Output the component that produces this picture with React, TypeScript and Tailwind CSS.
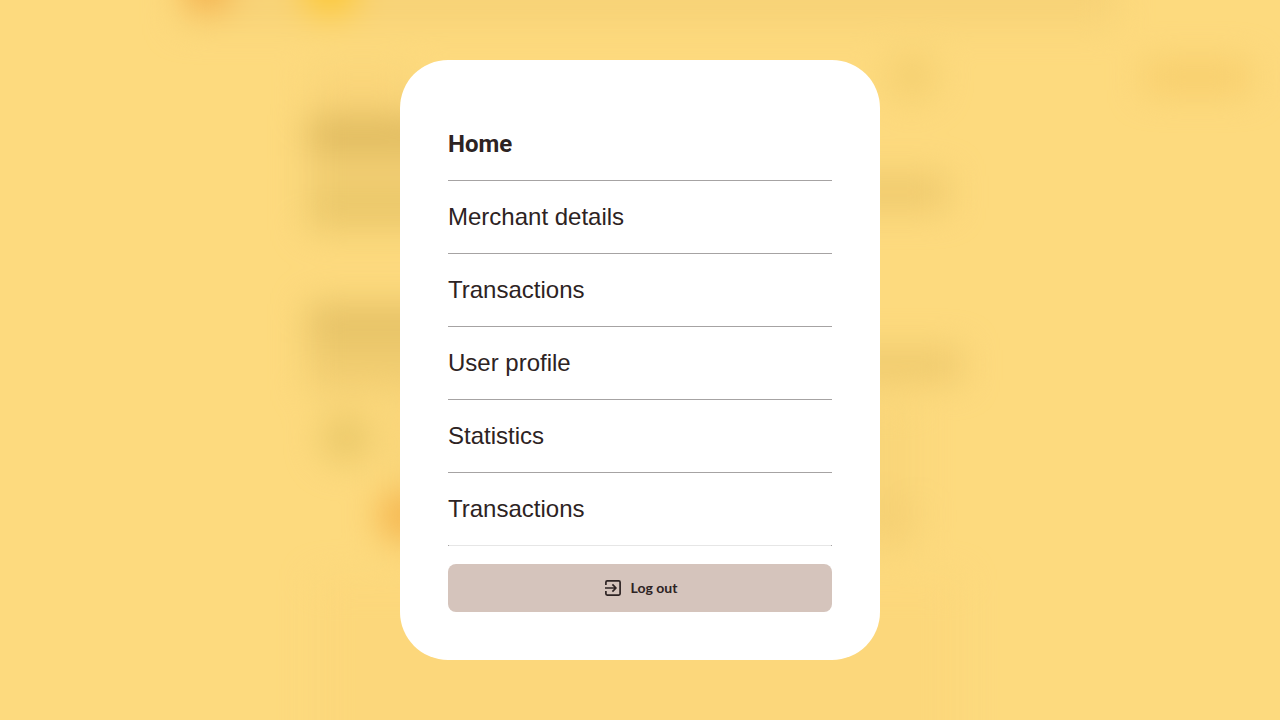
const menuItems = [
  { label: "Home", current: true },
  { label: "Merchant details", current: false },
  { label: "Transactions", current: false },
  { label: "User profile", current: false },
  { label: "Statistics", current: false },
  { label: "Transactions", current: false },
];

function BlurredBackdrop() {
  return (
    <svg
      aria-hidden="true"
      className="absolute inset-0 h-full w-full"
      viewBox="0 0 1280 720"
      preserveAspectRatio="xMidYMid slice"
    >
      <defs>
        <filter
          id="soft"
          filterUnits="userSpaceOnUse"
          x="-100"
          y="-100"
          width="1480"
          height="920"
          colorInterpolationFilters="sRGB"
        >
          <feGaussianBlur stdDeviation="17" />
        </filter>
      </defs>
      <g filter="url(#soft)">
        <rect x="180" y="-60" width="935" height="84" fill="#f7d277" />
        <circle cx="207" cy="-12" r="24" fill="#f4b04c" />
        <circle cx="330" cy="-12" r="28" fill="#fcc836" />
        <rect x="312" y="70" width="100" height="38" fill="#f9d479" />
        <rect x="308" y="115" width="170" height="40" fill="#e0bb60" />
        <rect x="308" y="155" width="170" height="27" fill="#f5d176" />
        <rect x="308" y="182" width="170" height="48" fill="#ebc86b" />
        <rect x="308" y="304" width="170" height="36" fill="#e5c166" />
        <rect x="308" y="340" width="170" height="50" fill="#f0cc70" />
        <circle cx="346" cy="438" r="25" fill="#eac869" />
        <rect x="385" y="400" width="530" height="155" fill="#f9d579" />
        <circle cx="403" cy="516" r="24" fill="#f4b24a" />
        <circle cx="912" cy="76" r="24" fill="#f4cf70" />
        <rect x="1145" y="62" width="105" height="30" fill="#f7cd6b" />
        <rect x="840" y="175" width="108" height="34" fill="#eec96d" />
        <rect x="840" y="349" width="122" height="32" fill="#eec96d" />
        <circle cx="890" cy="516" r="28" fill="#f5d074" />
        <rect x="317" y="580" width="642" height="220" fill="#fcd77b" />
      </g>
    </svg>
  );
}

function LogOutIcon() {
  return (
    <svg
      aria-hidden="true"
      className="size-5"
      viewBox="0 0 20 20"
      fill="none"
      stroke="currentColor"
      strokeWidth="1.7"
      strokeLinecap="butt"
      strokeLinejoin="round"
    >
      <path d="M2.9 7V4.2Q2.9 2.9 4.2 2.9H15.8Q17.1 2.9 17.1 4.2V15.8Q17.1 17.1 15.8 17.1H4.2Q2.9 17.1 2.9 15.8V13" />
      <path d="M2 10H12.8M9.4 6.4L13 10L9.4 13.6" />
    </svg>
  );
}

export default function App() {
  return (
    <div className="relative flex min-h-screen items-center justify-center overflow-hidden bg-[#fdda7e] font-['Liberation_Sans',Arial,sans-serif] text-[#2d2323]">
      <BlurredBackdrop />
      <main className="relative w-full max-w-[480px] rounded-[48px] bg-white p-12">
        <nav aria-label="Main menu">
          <ul>
            {menuItems.map((item, index) => (
              <li
                key={index}
                className="after:block after:h-px after:border-x after:border-[#a6a3a3] after:bg-[#a6a3a3] last:after:bg-[#e6e6e6]"
              >
                <a
                  href="#"
                  aria-current={item.current ? "page" : undefined}
                  className="block py-5 text-2xl leading-8 aria-[current=page]:font-['Roboto',sans-serif] aria-[current=page]:font-bold"
                >
                  {item.label}
                </a>
              </li>
            ))}
          </ul>
        </nav>
        <button
          type="button"
          className="mt-[18px] flex h-12 w-full items-center justify-center gap-2 rounded-lg bg-[#d5c4bc] font-['Lato',sans-serif] text-sm font-bold"
        >
          <LogOutIcon />
          Log out
        </button>
      </main>
    </div>
  );
}
